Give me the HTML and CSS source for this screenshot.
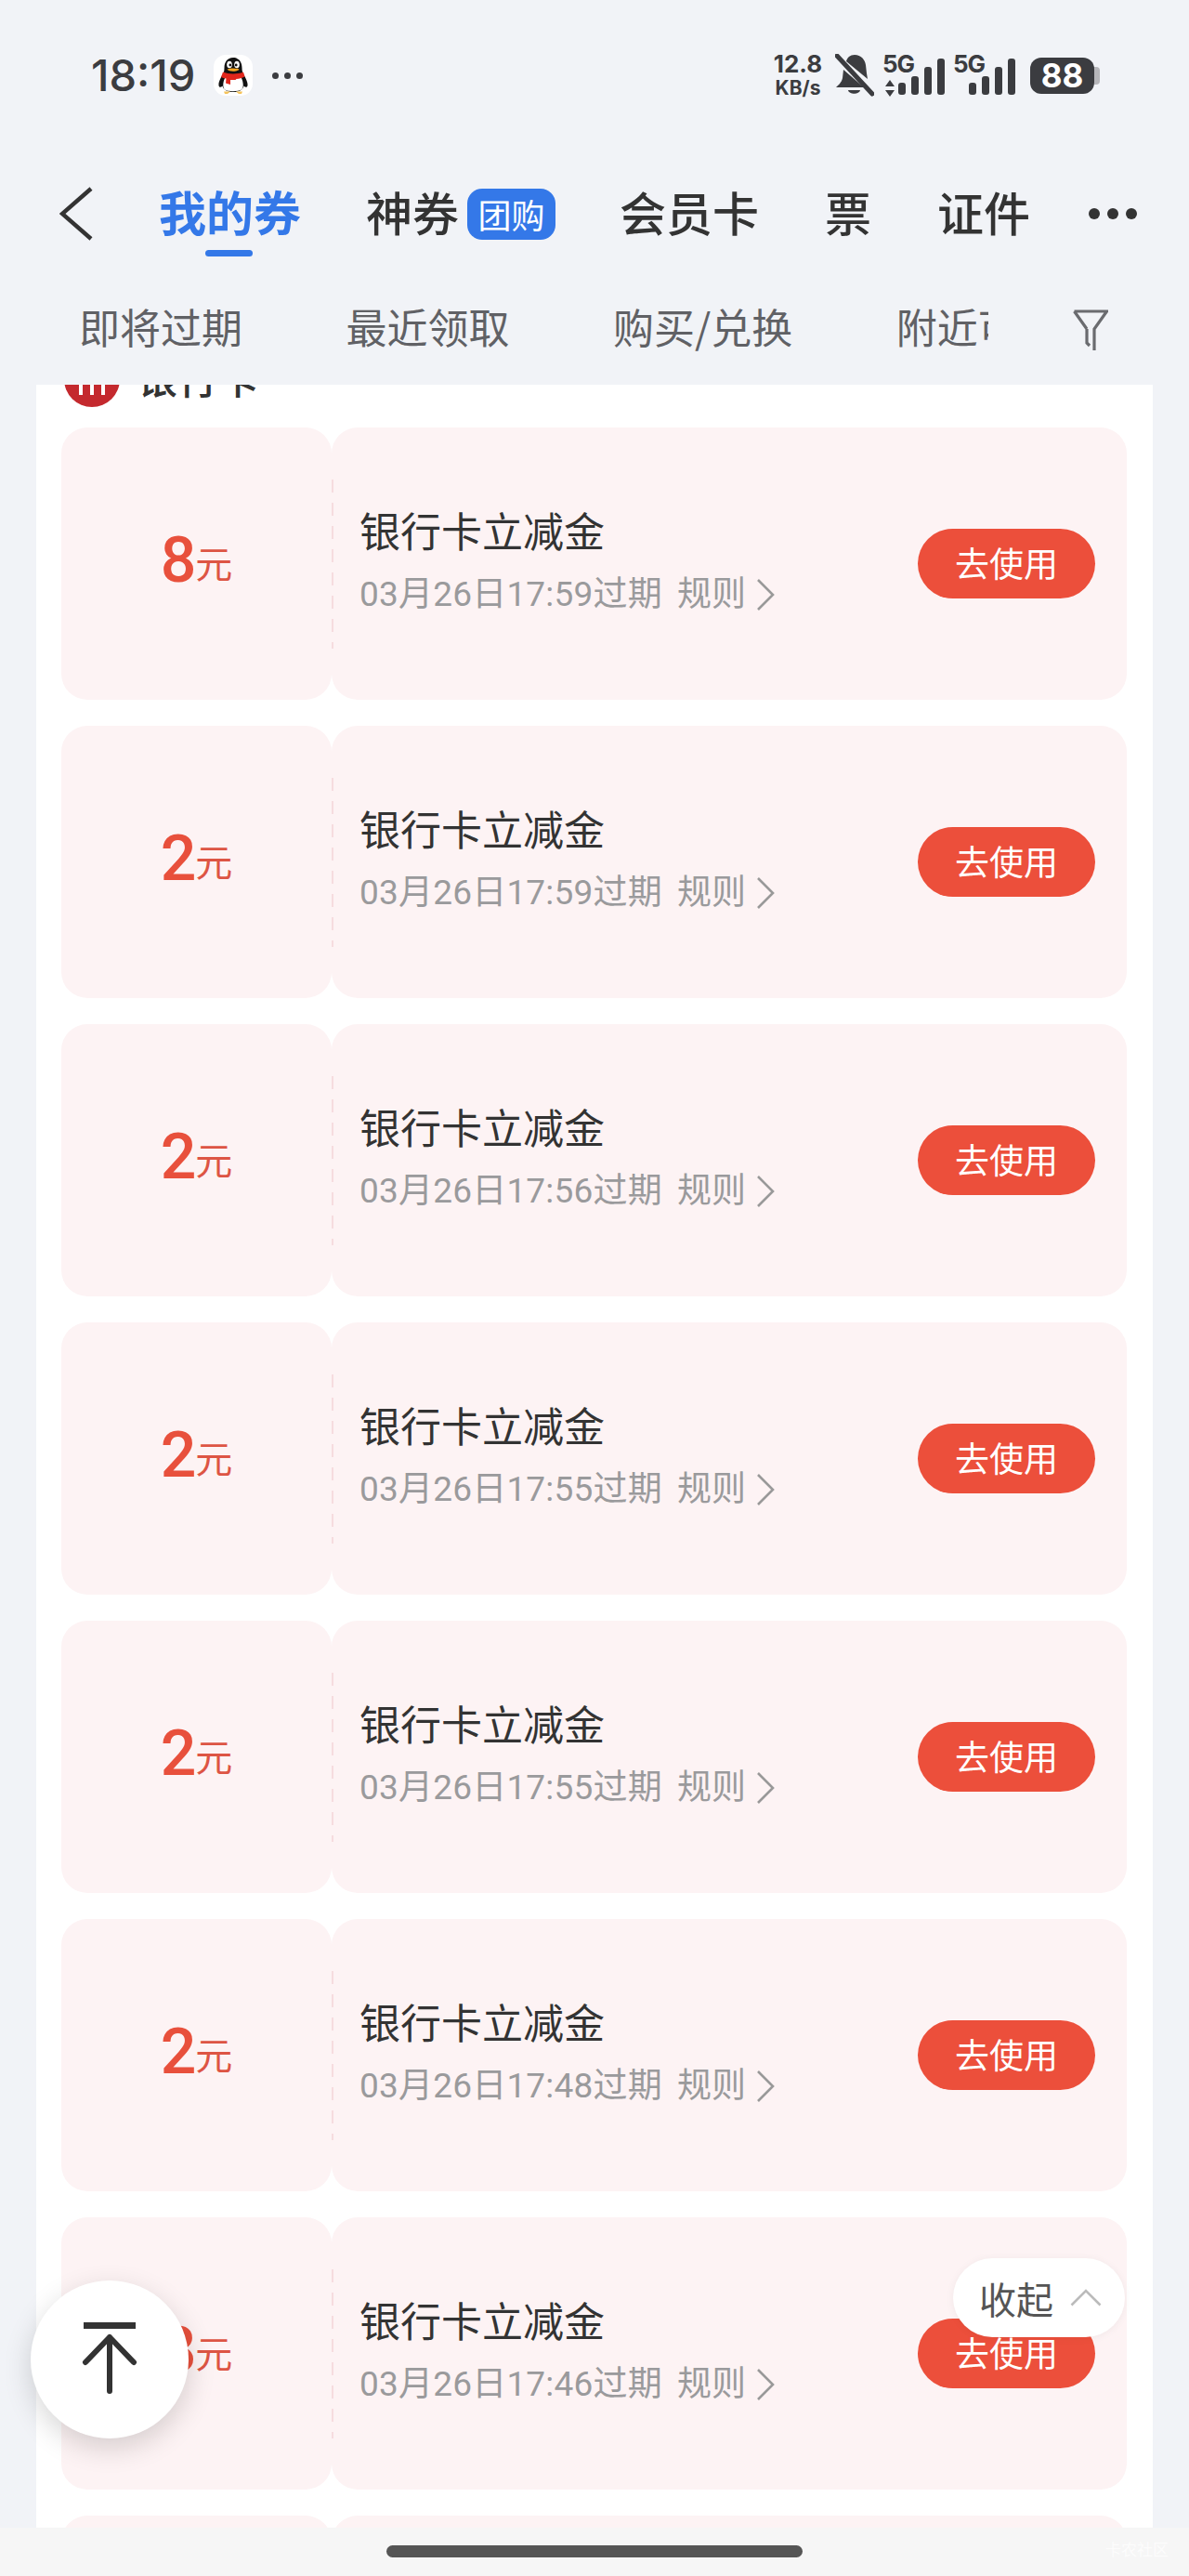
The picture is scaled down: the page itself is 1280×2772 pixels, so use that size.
FILE: index.html
```html
<!DOCTYPE html>
<html lang="zh-CN">
<head>
<meta charset="utf-8">
<title>我的券</title>
<link rel="stylesheet" href="styles.css">
</head>
<body>
<div class="page">
  <header class="top">
    <div class="status">
      <div class="status-left">
        <span class="time">18:19</span>
        <span class="qq">
          <svg width="42" height="44" viewBox="0 0 42 44">
            <rect width="42" height="44" rx="13" fill="#fff"/>
            <path d="M21 3c-6.500 0-9.500 5-9.500 11 0 3-.5 5-1.500 7-2 3-5 8-4.500 12 .3 2.500 2.500 2 4 .5 1 4 5 6.500 11.500 6.500s10.500-2.500 11.500-6.500c1.500 1.500 3.700 2 4-.5.500-4-2.500-9-4.500-12-1-2-1.500-4-1.500-7 0-6-3-11-9.500-11z" fill="#111"/>
            <path d="M12.500 24c3 1 14 1 17 0 2.500 5 3 10 1 13-2.500 3-16.500 3-19 0-2-3-1.500-8 1-13z" fill="#fff"/>
            <path d="M10 18.500c6 2.500 16 2.500 22 0l1.500 5c-3 1.500-6 2.200-9 2.500l-1 1H18v5l-5-1.500.5-5c-2 0-4-1-5.500-1.500z" fill="#e1261c"/>
            <ellipse cx="17" cy="10.500" rx="2.800" ry="3.800" fill="#fff"/>
            <ellipse cx="25" cy="10.500" rx="2.800" ry="3.800" fill="#fff"/>
            <circle cx="17.800" cy="11" r="1.400" fill="#111"/>
            <circle cx="24.200" cy="11" r="1.400" fill="#111"/>
            <path d="M14.500 15.500c3-1.500 10-1.500 13 0-2 3-11 3-13 0z" fill="#f5a623"/>
            <path d="M11 39.500h7l-3 2.500h-3zM24 39.500h7l-1 2.500h-3z" fill="#f5c35a"/>
          </svg>
        </span>
        <span class="notif-more"><i></i><i></i><i></i></span>
      </div>
      <div class="status-right">
        <div class="speed"><span class="speed-num">12.8</span><span class="speed-unit">KB/s</span></div>
        <svg class="bell" width="42" height="46" viewBox="0 0 42 46">
          <path d="M21 1c7 0 11 5 12 11l1 9 1 6-23-19c1-4 4-7 9-7zM9 17l22 19H1c2-2 6-5 7-10z" fill="#3b3c40"/>
          <path d="M14 39h13c-1 5-12 5-13 0z" fill="#3b3c40"/>
          <path d="M2 2l38 41" stroke="#3b3c40" stroke-width="5" stroke-linecap="round"/>
        </svg>
        <div class="sim">
          <span class="sim-label">5G</span>
          <svg class="sim-arrows" width="12" height="18" viewBox="0 0 12 18"><path d="M6 0l5 7H1zM6 18l5-7H1z" fill="#3b3c40"/></svg>
          <span class="bars"><i class="b1"></i><i class="b2"></i><i class="b3"></i><i class="b4"></i></span>
        </div>
        <div class="sim sim-second">
          <span class="sim-label">5G</span>
          <span class="bars"><i class="b1"></i><i class="b2"></i><i class="b3"></i><i class="b4"></i></span>
        </div>
        <div class="battery"><span class="battery-body">88</span><span class="battery-tip"></span></div>
      </div>
    </div>

    <nav class="tabs">
      <svg class="back" width="36" height="58" viewBox="0 0 36 58"><path d="M34 2L3 29l31 27" fill="none" stroke="#333" stroke-width="4.500"/></svg>
      <span class="tab tab-active">我的券</span>
      <span class="tab tab-group"><span class="tab-label">神券</span><span class="tab-badge">团购</span></span>
      <span class="tab"><span class="tab-label">会员卡</span></span>
      <span class="tab"><span class="tab-label">票</span></span>
      <span class="tab"><span class="tab-label">证件</span></span>
      <span class="tab-more"><i></i><i></i><i></i></span>
    </nav>

    <div class="filters">
      <div class="filter-list">
        <span class="filter">即将过期</span>
        <span class="filter">最近领取</span>
        <span class="filter">购买/兑换</span>
        <span class="filter">附近可用</span>
      </div>
      <svg class="funnel" width="38" height="46" viewBox="0 0 38 46"><path d="M1.500 2h35L23 21v23M15 21L1.500 2M15 21v15l3 3" fill="none" stroke="#6a6b6f" stroke-width="3.200"/></svg>
    </div>
  </header>

  <main class="panel">
    <div class="group-title">
      <svg class="bank-logo" width="60" height="60" viewBox="0 0 60 60">
        <circle cx="30" cy="30" r="30" fill="#c4292e"/>
        <path d="M16 20h4v27h-4zM28 20h4v27h-4zM40 20h4v27h-4z" fill="#fff"/>
      </svg>
      <span class="group-name">银行卡</span>
    </div>

    <article class="card">
      <div class="stub"><span class="amount">8</span><span class="unit">元</span></div>
      <div class="card-main">
        <span class="perf"></span>
        <div class="info"><div class="title">银行卡立减金</div><div class="meta"><span class="expiry">03月26日17:59过期</span><span class="rule">规则</span><svg class="chev" width="20" height="34" viewBox="0 0 20 34"><path d="M2 1l16 16L2 33" fill="none" stroke="#999" stroke-width="2.600"/></svg></div></div>
        <span class="use">去使用</span>
      </div>
    </article>
    <article class="card">
      <div class="stub"><span class="amount">2</span><span class="unit">元</span></div>
      <div class="card-main">
        <span class="perf"></span>
        <div class="info"><div class="title">银行卡立减金</div><div class="meta"><span class="expiry">03月26日17:59过期</span><span class="rule">规则</span><svg class="chev" width="20" height="34" viewBox="0 0 20 34"><path d="M2 1l16 16L2 33" fill="none" stroke="#999" stroke-width="2.600"/></svg></div></div>
        <span class="use">去使用</span>
      </div>
    </article>
    <article class="card">
      <div class="stub"><span class="amount">2</span><span class="unit">元</span></div>
      <div class="card-main">
        <span class="perf"></span>
        <div class="info"><div class="title">银行卡立减金</div><div class="meta"><span class="expiry">03月26日17:56过期</span><span class="rule">规则</span><svg class="chev" width="20" height="34" viewBox="0 0 20 34"><path d="M2 1l16 16L2 33" fill="none" stroke="#999" stroke-width="2.600"/></svg></div></div>
        <span class="use">去使用</span>
      </div>
    </article>
    <article class="card">
      <div class="stub"><span class="amount">2</span><span class="unit">元</span></div>
      <div class="card-main">
        <span class="perf"></span>
        <div class="info"><div class="title">银行卡立减金</div><div class="meta"><span class="expiry">03月26日17:55过期</span><span class="rule">规则</span><svg class="chev" width="20" height="34" viewBox="0 0 20 34"><path d="M2 1l16 16L2 33" fill="none" stroke="#999" stroke-width="2.600"/></svg></div></div>
        <span class="use">去使用</span>
      </div>
    </article>
    <article class="card">
      <div class="stub"><span class="amount">2</span><span class="unit">元</span></div>
      <div class="card-main">
        <span class="perf"></span>
        <div class="info"><div class="title">银行卡立减金</div><div class="meta"><span class="expiry">03月26日17:55过期</span><span class="rule">规则</span><svg class="chev" width="20" height="34" viewBox="0 0 20 34"><path d="M2 1l16 16L2 33" fill="none" stroke="#999" stroke-width="2.600"/></svg></div></div>
        <span class="use">去使用</span>
      </div>
    </article>
    <article class="card">
      <div class="stub"><span class="amount">2</span><span class="unit">元</span></div>
      <div class="card-main">
        <span class="perf"></span>
        <div class="info"><div class="title">银行卡立减金</div><div class="meta"><span class="expiry">03月26日17:48过期</span><span class="rule">规则</span><svg class="chev" width="20" height="34" viewBox="0 0 20 34"><path d="M2 1l16 16L2 33" fill="none" stroke="#999" stroke-width="2.600"/></svg></div></div>
        <span class="use">去使用</span>
      </div>
    </article>
    <article class="card">
      <div class="stub"><span class="amount">8</span><span class="unit">元</span></div>
      <div class="card-main">
        <span class="perf"></span>
        <div class="info"><div class="title">银行卡立减金</div><div class="meta"><span class="expiry">03月26日17:46过期</span><span class="rule">规则</span><svg class="chev" width="20" height="34" viewBox="0 0 20 34"><path d="M2 1l16 16L2 33" fill="none" stroke="#999" stroke-width="2.600"/></svg></div></div>
        <span class="use">去使用</span>
      </div>
    </article>
    <article class="card">
      <div class="stub"></div>
      <div class="card-main"></div>
    </article>
  </main>

  <footer class="nav-bar"><span class="home-bar"></span><span class="watermark">卡农社区</span></footer>

  <button class="to-top" type="button" aria-label="回到顶部">
    <svg width="64" height="80" viewBox="0 0 64 80"><path d="M4 3.500h56" stroke="#333" stroke-width="7"/><path d="M32 74V16M6 43l26-27 26 27" fill="none" stroke="#333" stroke-width="6" stroke-linecap="round" stroke-linejoin="round"/></svg>
  </button>
  <button class="collapse" type="button"><span>收起</span><svg width="34" height="19" viewBox="0 0 34 19"><path d="M1.500 17.500L17 2l15.500 15.500" fill="none" stroke="#bbb" stroke-width="2.600"/></svg></button>
</div>
</body>
</html>
```

FILE: styles.css
```css
* { box-sizing: border-box; }
html, body { margin: 0; padding: 0; }
body {
  font-family: "Noto Sans CJK SC", "Noto Sans", sans-serif;
  background: #f1f3f7;
  color: #333;
}
i { display: block; font-style: normal; }

.page {
  position: relative;
  width: 1280px;
  height: 2772px;
  display: flex;
  flex-direction: column;
  overflow: hidden;
}

/* header */
.top { flex: none; height: 414px; background: #f1f3f7; }

.status {
  height: 162px;
  padding: 0 96px 0 98px;
  display: flex;
  align-items: center;
  justify-content: space-between;
}
.status-left { display: flex; align-items: center; }
.time {
  font-family: Inter, "Noto Sans", sans-serif;
  font-size: 47px;
  font-weight: 500;
  line-height: 50px;
  color: #3b3c40;
}
.qq { display: flex; margin-left: 20px; }
.notif-more { display: flex; gap: 6px; margin-left: 21px; }
.notif-more i { width: 7px; height: 7px; border-radius: 50%; background: #3b3c40; }

.status-right { display: flex; align-items: center; color: #3b3c40; font-family: Inter, "Noto Sans", sans-serif; }
.speed { display: flex; flex-direction: column; align-items: center; width: 54px; font-weight: 700; }
.speed-num { font-size: 26px; line-height: 28px; }
.speed-unit { font-size: 21px; line-height: 24px; }
.bell { margin-left: 13px; }
.sim { position: relative; width: 67px; height: 46px; margin-left: 9px; }
.sim-label { position: absolute; left: 0; top: -3px; font-size: 26px; line-height: 28px; font-weight: 700; letter-spacing: -1px; }
.sim-arrows { position: absolute; left: 2px; bottom: 0; }
.bars { position: absolute; right: 0; bottom: 2px; display: flex; align-items: flex-end; gap: 6px; }
.bars i { width: 8px; border-radius: 3px; background: #3b3c40; }
.bars .b1 { height: 13px; }
.bars .b2 { height: 20px; }
.bars .b3 { height: 30px; }
.bars .b4 { height: 39px; }
.battery { display: flex; align-items: center; margin-left: 16px; }
.battery-body {
  width: 69px;
  height: 39px;
  border-radius: 12px;
  background: #3b3c40;
  color: #fff;
  font-size: 35px;
  font-weight: 700;
  line-height: 39px;
  text-align: center;
}
.battery-tip { width: 6px; height: 19px; border-radius: 0 4px 4px 0; background: #b6b6ba; }

.tabs {
  height: 136px;
  padding-left: 64px;
  display: flex;
  align-items: center;
  gap: 71px;
}
.back { margin-right: 0; }
.tab { position: relative; font-size: 50px; line-height: 60px; font-weight: 500; color: #333; white-space: nowrap; }
.tab-label { display: block; padding-bottom: 6px; }
.tab-active {
  font-size: 51px;
  font-weight: 700;
  color: #3478e8;
  padding-bottom: 6px;
  margin-right: -1px;
}
.tab-active::after {
  content: "";
  position: absolute;
  left: 50px;
  bottom: -13px;
  width: 51px;
  height: 7px;
  border-radius: 4px;
  background: #3478e8;
}
.tab-group { display: flex; align-items: center; gap: 9px; margin-right: -2px; }
.tab-badge {
  width: 95px;
  height: 55px;
  border-radius: 16px;
  background: #3478e8;
  color: #fff;
  font-size: 36px;
  font-weight: 400;
  line-height: 55px;
  text-align: center;
}
.tab-more { display: flex; gap: 8px; margin-left: -8px; }
.tab-more i { width: 12px; height: 12px; border-radius: 50%; background: #333; }

.filters {
  height: 116px;
  padding: 0 0 0 85px;
  display: flex;
  align-items: center;
}
.filter-list { width: 979px; overflow: hidden; display: flex; gap: 111.500px; }
.filter { flex: none; font-size: 44px; line-height: 56px; padding-bottom: 10px; color: #606165; white-space: nowrap; }
.funnel { margin-left: 91px; }

/* panel */
.panel {
  flex: 1;
  min-height: 0;
  margin: 0 39px;
  padding: 0 28px 0 27px;
  background: #fff;
  overflow: hidden;
}
.group-title {
  height: 60px;
  margin-top: -36px;
  margin-bottom: 22px;
  display: flex;
  align-items: center;
  gap: 18px;
  padding-left: 3px;
}
.group-name { font-size: 44px; line-height: 54px; padding-bottom: 6px; font-weight: 500; color: #333; }
.bank-logo { flex: none; }

.card { display: flex; height: 293px; margin-bottom: 28px; }
.stub {
  flex: none;
  width: 291px;
  border-radius: 28px;
  background: #fdf3f4;
  display: flex;
  align-items: center;
  justify-content: center;
  padding-bottom: 8px;
  color: #e8503c;
}
.amount { font-family: Roboto, Inter, sans-serif; font-size: 68px; line-height: 80px; font-weight: 500; }
.unit { font-size: 40px; line-height: 40px; margin: 4px 0 0 -1px; color: #dd5544; }
.card-main {
  flex: 1;
  min-width: 0;
  border-radius: 28px;
  background: #fdf3f4;
  display: flex;
  align-items: center;
  padding-right: 34px;
}
.perf {
  flex: none;
  width: 2px;
  height: 182px;
  background: repeating-linear-gradient(to bottom, #f6dcdf 0 14px, transparent 14px 25px);
}
.info { flex: 1; min-width: 0; padding-left: 28px; margin-top: -9px; }
.title { font-size: 44px; line-height: 56px; color: #333; }
.meta {
  margin-top: 20px;
  display: flex;
  align-items: center;
  font-family: Roboto, "Noto Sans CJK SC", sans-serif;
  font-size: 37px;
  line-height: 44px;
  color: #9a9a9c;
}
.expiry { letter-spacing: .2px; }
.rule { margin-left: 16px; }
.chev { margin-left: 11px; }
.use {
  flex: none;
  width: 191px;
  height: 75px;
  padding-bottom: 2px;
  border-radius: 38px;
  background: #ec4f3b;
  color: #fff;
  font-size: 37px;
  line-height: 73px;
  text-align: center;
}

/* bottom bar */
.nav-bar {
  position: relative;
  flex: none;
  height: 52px;
  padding-top: 19px;
  background: #f6f6f6;
  display: flex;
  justify-content: center;
  align-items: flex-start;
}
.home-bar { width: 448px; height: 13px; border-radius: 7px; background: #555; }
.watermark {
  position: absolute;
  right: 22px;
  top: 11px;
  font-size: 17px;
  line-height: 24px;
  color: rgba(255, 255, 255, .75);
}

/* floating */
.to-top {
  position: absolute;
  left: 33px;
  top: 2454px;
  width: 170px;
  height: 170px;
  padding: 0;
  border: 0;
  border-radius: 50%;
  background: #fff;
  box-shadow: 0 10px 30px rgba(0, 0, 0, .16);
  display: flex;
  align-items: center;
  justify-content: center;
}
.collapse {
  position: absolute;
  left: 1026px;
  top: 2430px;
  width: 185px;
  height: 85px;
  padding: 0 0 0 28px;
  border: 0;
  border-radius: 43px;
  background: #fff;
  box-shadow: 0 1px 10px rgba(0, 0, 0, .05);
  display: flex;
  align-items: center;
  gap: 18px;
  font-family: "Noto Sans CJK SC", sans-serif;
  font-size: 40px;
  line-height: 50px;
  color: #555;
}
```
